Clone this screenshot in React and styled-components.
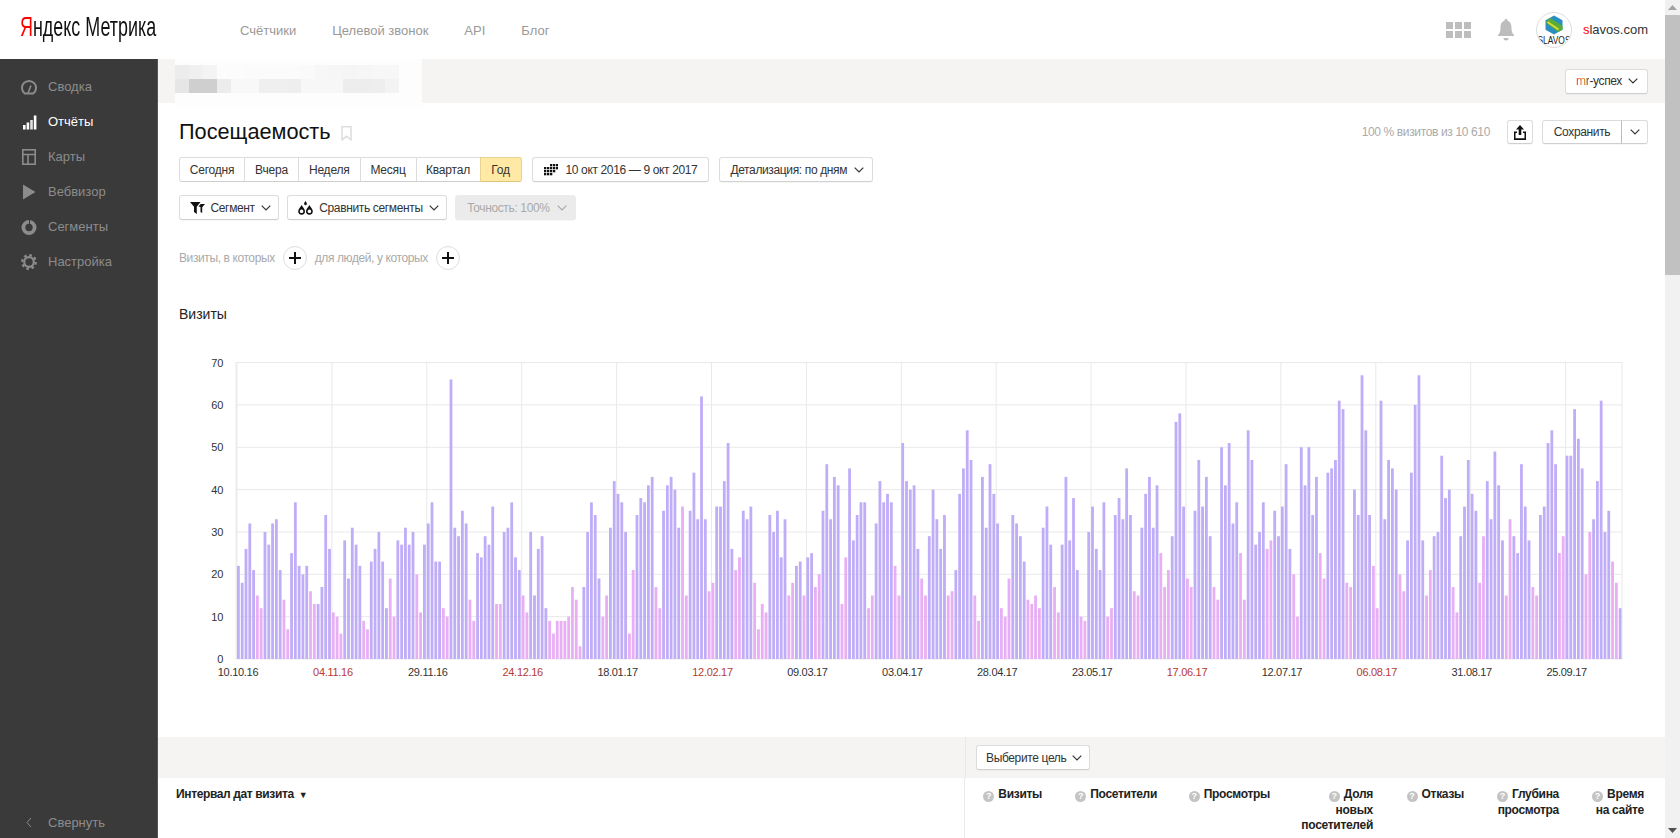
import React from "react";
import styled, { createGlobalStyle } from "styled-components";

const GlobalStyle = createGlobalStyle`
  html, body {
    margin: 0;
    height: 838px;
    overflow: hidden;
    background: #fff;
    font-family: "Liberation Sans", Arial, sans-serif;
  }
`;

const visits = [
  22,18,26,32,21,-15,-12, 30,27,32,33,21,-14,-7, 25,37,22,20,22,-16,-13, 13,17,34,26,-11,-10,-6,
  28,19,31,27,22,-9,-7, 23,26,30,23,12,-19,-10, 28,27,31,27,30,-20,-11, 27,32,37,23,23,-12,-10,
  66,31,29,35,32,-14,-9, 25,24,29,27,36,-13,-13, 30,31,37,24,21,-15,-11, 30,15,26,29,12,-9,-6,
  -9,-9,-9,-10,-17,-14,-3, 17,30,37,34,19,-10,-15, 31,42,39,37,30,-6,-21, 34,38,37,41,43,-17,-12,
  35,41,43,40,31,-36,-15, 35,44,33,62,33,-16,-18, 36,36,42,51,26,-21,-24, 35,33,36,-18,-7,-13,-11,
  34,30,35,24,33,-15,-18, 22,23,-15,24,25,-17,-20, 35,46,33,43,41,-13,-24, 45,28,34,37,37,-12,-15,
  32,42,37,39,37,-22,-15, 51,42,40,41,26,-19,-15, 29,40,33,26,34,-15,-16, 21,39,45,54,47,-15,-9,
  43,31,46,39,32,-12,-10, -19,34,32,29,23,-14,-13, -15,-12,31,36,27,-17,-11, 27,43,28,38,21,-10,-9,
  30,36,26,21,37,-10,-12, 34,38,33,45,34,-16,-15, 31,39,43,31,41,-25,-17, -21,29,56,58,36,-19,-17,
  35,47,36,43,29,-17,-14, 50,41,51,32,37,-25,-14, 54,47,27,30,37,-26,-28, 35,29,36,46,26,-20,-10,
  50,41,50,34,43,-25,-19, 44,45,47,61,59,-18,-17, 40,34,67,54,34,-22,-12, 61,33,47,45,40,-20,-16,
  28,44,60,67,28,-15,-21, 29,30,48,38,40,-17,-11, 29,36,47,39,35,-18,-29, 42,33,49,41,28,-15,-33,
  29,25,46,36,28,-17,-15, 34,36,51,54,46,-25,-29, 48,48,59,52,45,-20,-30, 33,42,61,30,35,-23,-18,
  12,
];

const dateTicks = [
  ["10.10.16"], ["04.11.16", true], ["29.11.16"], ["24.12.16", true], ["18.01.17"],
  ["12.02.17", true], ["09.03.17"], ["03.04.17"], ["28.04.17"], ["23.05.17"],
  ["17.06.17", true], ["12.07.17"], ["06.08.17", true], ["31.08.17"], ["25.09.17"],
];

const Page = styled.div`
  display: flex;
  width: 1680px;
  height: 838px;
  overflow: hidden;
`;

const Content = styled.div`
  flex: 1;
  min-width: 0;
  display: flex;
  flex-direction: column;
`;

const Header = styled.header`
  height: 59px;
  flex: none;
  display: flex;
  align-items: center;
  padding-right: 17px;
  background: #fff;
`;

const Logo = styled.div`
  width: 240px;
  flex: none;
  padding-left: 20px;
  font-size: 28px;
  line-height: 32px;
  color: #111;
  white-space: nowrap;
  box-sizing: border-box;
  margin-top: -5px;
`;

const LogoText = styled.span`
  display: inline-block;
  transform: scaleX(0.64);
  transform-origin: left center;
  b {
    font-weight: normal;
    color: #f00;
  }
`;

const TopNav = styled.nav`
  display: flex;
  gap: 36px;
  flex: 1;
  margin-top: 1px;
`;

const TopLink = styled.a`
  font-size: 13px;
  color: #999;
`;

const HeaderTools = styled.div`
  display: flex;
  align-items: center;
`;

const Avatar = styled.div`
  width: 36px;
  height: 36px;
  margin: 0 11px 0 22px;
  border-radius: 50%;
  border: 1px solid #ddd;
  box-sizing: border-box;
`;

const UserName = styled.span`
  font-size: 13px;
  color: #333;
  b {
    font-weight: normal;
    color: #f00;
  }
`;

const Body = styled.div`
  flex: 1;
  min-height: 0;
  display: flex;
`;

const Sidebar = styled.aside`
  width: 158px;
  flex: none;
  box-sizing: border-box;
  padding: 10px 0 0;
  background: #3a3a3a;
  border-right: 1px solid #555;
  display: flex;
  flex-direction: column;
`;

const SideItem = styled.div`
  height: 35px;
  display: flex;
  align-items: center;
  gap: 11px;
  padding-left: 21px;
  font-size: 13px;
  color: ${(p) => (p.$active ? "#fff" : "#8c8c8c")};
  svg {
    flex: none;
    width: 16px;
    height: 18px;
  }
`;

const Collapse = styled.div`
  margin-top: auto;
  height: 32px;
  display: flex;
  align-items: center;
  gap: 16px;
  padding-left: 26px;
  font-size: 13px;
  color: #8c8c8c;
`;

const Main = styled.main`
  flex: 1;
  min-width: 0;
  overflow: hidden;
  display: flex;
  flex-direction: column;
`;

const Strip = styled.div`
  position: relative;
  height: 44px;
  flex: none;
  display: flex;
  align-items: center;
  justify-content: flex-end;
  padding-right: 17px;
  background: #f5f4f2;
`;

const BlurPatch = styled.div`
  position: absolute;
  left: 17px;
  top: -7px;
  width: 247px;
  height: 55px;
  box-sizing: border-box;
  padding-top: 13px;
  background: #fdfdfd;
  filter: blur(0.6px);
`;

const BlurRow = styled.div`
  display: flex;
  height: 14px;
`;

const BlurCell = styled.div`
  width: 14px;
  background: ${(p) => p.$shade};
`;

const Btn = styled.div`
  display: inline-flex;
  align-items: center;
  justify-content: center;
  gap: ${(p) => p.$gap ?? 6}px;
  height: 25px;
  box-sizing: border-box;
  padding: 0 ${(p) => p.$padR ?? p.$pad ?? 10}px 0 ${(p) => p.$pad ?? 10}px;
  background: #fff;
  border: 1px solid #dcdcdc;
  border-bottom-color: #cfcfcf;
  border-radius: 3px;
  font-size: 12px;
  letter-spacing: -0.36px;
  color: #333;
  white-space: nowrap;
  box-shadow: 0 1px 0 rgba(0, 0, 0, 0.03);
  svg {
    flex: none;
  }
`;

const MutedBtn = styled(Btn)`
  background: #ebebeb;
  border-color: #ebebeb;
  color: #aaa;
`;

const Gradient = styled.span`
  background: linear-gradient(90deg, #f03a17 0, #f08a17 60%, #333 100%);
  -webkit-background-clip: text;
  background-clip: text;
  color: transparent;
`;

const Toolbar = styled.section`
  padding: 17px 17px 0 21px;
  flex: none;
`;

const TitleRow = styled.div`
  height: 24px;
  display: flex;
  align-items: center;
`;

const Title = styled.h1`
  margin: 0 10px 0 0;
  font-size: 21.7px;
  font-weight: normal;
  color: #111;
`;

const Stat = styled.span`
  margin-left: auto;
  margin-right: 17px;
  font-size: 12px;
  letter-spacing: -0.36px;
  color: #aaa;
`;

const IconBtn = styled(Btn)`
  width: 26px;
  height: 24px;
  padding: 0;
  margin-right: 9px;
`;

const Joined = styled.div`
  display: flex;
`;

const SaveBtn = styled(Btn)`
  width: 80px;
  height: 24px;
  padding: 0;
  border-radius: 3px 0 0 3px;
`;

const SaveCaret = styled(Btn)`
  width: 27px;
  height: 24px;
  padding: 0;
  margin-left: -1px;
  border-radius: 0 3px 3px 0;
  border-left-color: #bdbdbd;
`;

const Row = styled.div`
  display: flex;
  gap: ${(p) => p.$gap ?? 10}px;
  align-items: center;
  margin-top: ${(p) => p.$top}px;
`;

const Segmented = styled.div`
  display: flex;
  height: 25px;
  box-sizing: border-box;
  margin-right: 0.5px;
`;

const Period = styled.div`
  display: flex;
  align-items: center;
  justify-content: center;
  width: ${(p) => p.$w}px;
  box-sizing: border-box;
  font-size: 12px;
  letter-spacing: -0.2px;
  color: #333;
  background: ${(p) => (p.$active ? "#ffe9a4" : "#fff")};
  border: 1px solid ${(p) => (p.$active ? "#e9d48f" : "#dcdcdc")};
  border-bottom-color: ${(p) => (p.$active ? "#dcc67e" : "#cfcfcf")};
  margin-left: -1px;
  &:first-child {
    margin-left: 0;
    border-radius: 3px 0 0 3px;
  }
  &:last-child {
    border-radius: 0 3px 3px 0;
  }
`;

const Hint = styled.span`
  font-size: 12px;
  letter-spacing: -0.4px;
  color: #aaa;
`;

const AddCircle = styled.div`
  width: 24px;
  height: 24px;
  display: flex;
  align-items: center;
  justify-content: center;
  border-radius: 50%;
  border: 1px solid #dedede;
  box-sizing: border-box;
  background: #fff;
`;

const SectionTitle = styled.h2`
  margin: 34px 0 0;
  height: 20px;
  line-height: 20px;
  font-size: 14px;
  font-weight: normal;
  color: #222;
`;

const ChartBox = styled.div`
  height: 335px;
  margin: 26px 0 52px 42px;
  flex: none;
`;

const GridLine = styled.line`
  stroke: #e9e9e9;
  stroke-width: 1;
`;

const AxisText = styled.text`
  font-family: "Liberation Sans", Arial, sans-serif;
  font-size: 11px;
  letter-spacing: -0.3px;
  fill: ${(p) => (p.$red ? "#b83a30" : "#333")};
`;

const Band = styled.div`
  height: 41px;
  flex: none;
  display: flex;
  background: #f5f4f2;
`;

const BandLeft = styled.div`
  width: 807px;
  flex: none;
  border-right: 1px solid #e9e9e7;
`;

const BandRight = styled.div`
  flex: 1;
  display: flex;
  align-items: center;
  padding-left: 10px;
`;

const TableHead = styled.div`
  flex: 1;
  display: flex;
`;

const DimCell = styled.div`
  width: 807px;
  flex: none;
  box-sizing: border-box;
  padding: 9px 0 0 18px;
  border-right: 1px solid #e9e9e7;
  font-size: 12px;
  line-height: 15.5px;
  font-weight: bold;
  letter-spacing: -0.37px;
  color: #222;
  i {
    font-style: normal;
    font-size: 9px;
    margin-left: 5px;
  }
`;

const MetricCell = styled.div`
  width: ${(p) => p.$w}px;
  flex: none;
  box-sizing: border-box;
  padding-top: 9px;
  text-align: right;
  font-size: 12px;
  line-height: 15.5px;
  font-weight: bold;
  letter-spacing: -0.3px;
  color: #222;
`;

const QMark = styled.span`
  display: inline-block;
  width: 11px;
  height: 11px;
  margin-right: 4px;
  border-radius: 50%;
  background: #c4c4c4;
  color: #fff;
  font-size: 9px;
  line-height: 11px;
  letter-spacing: 0;
  text-align: center;
  vertical-align: -1px;
`;

const Scrollbar = styled.div`
  width: 15px;
  flex: none;
  display: flex;
  flex-direction: column;
  background: #f1f1f1;
`;

const ScrollArrow = styled.div`
  height: 15px;
  flex: none;
  display: flex;
  align-items: center;
  justify-content: center;
  margin-top: ${(p) => (p.$down ? "auto" : 0)};
`;

const ScrollThumb = styled.div`
  height: 260px;
  background: #c1c1c1;
`;

const BookmarkSvg = styled.svg`
  margin-top: 3px;
`;

const BellSvg = styled.svg`
  margin-left: 27px;
`;

const Chevron = ({ color = "#333" }) => (
  <svg width="10" height="6" viewBox="0 0 10 6">
    <path d="M.7.7L5 5l4.300-4.300" fill="none" stroke={color} strokeWidth="1.200" />
  </svg>
);

const Plus = () => (
  <svg width="12" height="12" viewBox="0 0 12 12">
    <path d="M6 0v12M0 6h12" stroke="#111" strokeWidth="2" />
  </svg>
);

const GaugeIcon = () => (
  <svg viewBox="0 0 16 18">
    <path d="M3.800 15.500h8.400A7 7 0 1 0 3.800 15.500z" fill="none" stroke="#8c8c8c" strokeWidth="2" />
    <path d="M7 15l3-7.500" stroke="#8c8c8c" strokeWidth="1.600" />
  </svg>
);

const BarsIcon = () => (
  <svg viewBox="0 0 16 18" fill="#fff">
    <rect x="2" y="12" width="2.600" height="4.500" />
    <rect x="5.600" y="9.500" width="2.600" height="7" />
    <rect x="9.200" y="7" width="2.600" height="9.500" opacity=".85" />
    <rect x="12.800" y="2.500" width="2.600" height="14" />
  </svg>
);

const MapIcon = () => (
  <svg viewBox="0 0 16 18" fill="none" stroke="#8c8c8c" strokeWidth="1.600">
    <rect x="1.800" y="1.800" width="12.400" height="14.400" />
    <path d="M2 6.500h12M7 6.500V16" />
  </svg>
);

const PlayIcon = () => (
  <svg viewBox="0 0 16 18">
    <path d="M2 1.500l12.500 7.500L2 16.500z" fill="#8c8c8c" />
  </svg>
);

const DonutIcon = () => (
  <svg viewBox="0 0 16 18">
    <circle cx="8" cy="9.500" r="5.600" fill="none" stroke="#8c8c8c" strokeWidth="3.800" />
    <path d="M8.500 1v5.500" stroke="#3a3a3a" strokeWidth="1" />
  </svg>
);

const GearIcon = () => (
  <svg viewBox="0 0 16 18" fill="none" stroke="#8c8c8c">
    <circle cx="8" cy="9" r="4.800" strokeWidth="2.200" />
    <circle cx="8" cy="9" r="6.800" strokeWidth="2.200" strokeDasharray="2.700 2.640" />
  </svg>
);

const CalendarIcon = () => (
  <svg width="14" height="12" viewBox="0 0 14 12" fill="#111">
    {[
      [6, 0], [9, 0], [12, 0],
      [0, 3], [3, 3], [6, 3], [9, 3], [12, 3],
      [0, 6], [3, 6], [6, 6], [9, 6],
      [0, 9], [3, 9], [6, 9],
    ].map(([x, y]) => (
      <rect key={x + "-" + y} x={x} y={y} width="2.300" height="2.300" />
    ))}
  </svg>
);

const FunnelIcon = () => (
  <svg width="15" height="12" viewBox="0 0 15 12" fill="#111">
    <path d="M0 0h10.500L6.800 4.800V12L4 10V4.800z" />
    <path d="M8.500 4.500L10.700 2H15l-2.800 3.200V11L10.500 10V5z" />
  </svg>
);

const DropsIcon = () => (
  <svg width="15" height="14" viewBox="0 0 15 14" fill="#111">
    <path fillRule="evenodd" d="M3.600 4C5 6.600 7 8 7 10.300a3.400 3.400 0 0 1-6.800 0C.2 8 2.200 6.600 3.600 4zm0 4.500a1.800 1.800 0 1 0 .01 0z" />
    <path fillRule="evenodd" d="M11.400 4c1.400 2.600 3.400 4 3.400 6.300a3.400 3.400 0 0 1-6.800 0C8 8 10 6.600 11.400 4zm0 4.500a1.800 1.800 0 1 0 .01 0z" />
    <path d="M7.500 0c.7 1.200 1.400 1.900 1.400 2.800a1.400 1.400 0 0 1-2.800 0C6.100 1.900 6.800 1.200 7.500 0z" />
  </svg>
);

const ShareIcon = () => (
  <svg width="14" height="15" viewBox="0 0 14 15" fill="#111">
    <path d="M7 0l4 4.500H8.300V10H5.700V4.500H3z" />
    <path d="M1 6.500h3V8H2.500v5.200h9V8H10V6.500h3V15H1z" />
  </svg>
);

const BookmarkIcon = () => (
  <BookmarkSvg width="11" height="15" viewBox="0 0 11 15">
    <path d="M1 .8h9v13l-4.500-3.500L1 13.800z" fill="none" stroke="#ddd" strokeWidth="1.500" />
  </BookmarkSvg>
);

const AppsIcon = () => (
  <svg width="25" height="16" viewBox="0 0 25 16" fill="#bdbdbd">
    {[0, 9, 18].map((x) => (
      <React.Fragment key={x}>
        <rect x={x} y="0" width="7" height="7" />
        <rect x={x} y="9" width="7" height="7" />
      </React.Fragment>
    ))}
  </svg>
);

const BellIcon = () => (
  <BellSvg width="16" height="22" viewBox="0 0 16 22" fill="#bdbdbd">
    <path d="M8 0a1.500 1.500 0 0 1 1.500 1.800C12.500 2.600 13.500 5.500 13.500 9c0 4 1 5.500 2.500 7v1H0v-1c1.500-1.500 2.500-3 2.500-7 0-3.500 1-6.400 4-7.200A1.500 1.500 0 0 1 8 0z" />
    <path d="M5.500 19h5a2.500 2.500 0 0 1-5 0z" />
  </BellSvg>
);

const AvatarLogo = () => (
  <svg width="34" height="34" viewBox="0 0 34 34">
    <clipPath id="avatar-clip">
      <circle cx="17" cy="17" r="17" />
    </clipPath>
    <g clipPath="url(#avatar-clip)">
      <path d="M17 2.500l8.500 4.800v9.400L17 21.500l-8.500-4.800V7.300z" fill="#2a8fc0" />
      <path d="M8.500 9.500L13 5l12.500 8v3.700L21 19z" fill="#5aae35" />
      <path d="M10.500 9l11 7.500" stroke="#e2d93a" strokeWidth="1.600" />
      <text
        x="0.500"
        y="31"
        textLength="33"
        lengthAdjust="spacingAndGlyphs"
        fontSize="10.500"
        fontFamily="Liberation Sans, sans-serif"
        fill="#222"
      >
        SLAVOS
      </text>
    </g>
  </svg>
);

const BlurGrid = () => {
  const rows = [
    ["#ececec", "#f0f0f0", "#f4f4f4", "#fcfcfc", "#fcfcfc", "#fbfbfb", "#fbfbfb", "#fbfbfb", "#fbfbfb", "#fafafa", "#f7f7f7", "#f6f6f6", "#f5f5f5", "#f6f6f6", "#f7f7f7", "#f7f7f7"],
    ["#e6e6e6", "#cfcfcf", "#cfcfcf", "#ececec", "#f8f8f8", "#f8f8f8", "#efefef", "#efefef", "#eeeeee", "#f7f7f7", "#f7f7f7", "#f7f7f7", "#ededed", "#ededed", "#eeeeee", "#f3f3f3"],
  ];
  return (
    <BlurPatch>
      {rows.map((cells, r) => (
        <BlurRow key={r}>
          {cells.map((c, i) => (
            <BlurCell key={i} $shade={c} />
          ))}
        </BlurRow>
      ))}
    </BlurPatch>
  );
};

const VisitsChart = () => {
  const x0 = 237;
  const step = 3.796;
  const base = 659;
  const unit = 4.235;
  return (
    <svg width="1440" height="335" viewBox="200 350 1440 335">
      {[0, 10, 20, 30, 40, 50, 60, 70].map((v) => (
        <React.Fragment key={v}>
          <GridLine x1="236" x2="1622" y1={base - v * unit} y2={base - v * unit} />
          <AxisText x="223" y={base - v * unit + 4} textAnchor="end">{v}</AxisText>
        </React.Fragment>
      ))}
      <GridLine x1="236" x2="236" y1="362" y2="659" />
      <GridLine x1="1622" x2="1622" y1="362" y2="659" />
      {dateTicks.map(([label, red], i) => {
        const x = x0 + i * 25 * step;
        return (
          <React.Fragment key={label}>
            <GridLine x1={x} x2={x} y1="362" y2="659" />
            <AxisText x={x + 1} y="676" textAnchor="middle" $red={red}>{label}</AxisText>
          </React.Fragment>
        );
      })}
      {visits.map((v, i) => (
        <rect
          key={i}
          x={x0 + i * step}
          y={base - Math.abs(v) * unit}
          width="2.800"
          height={Math.abs(v) * unit}
          fill={v < 0 ? "#e9aff5" : "#bfadf7"}
        />
      ))}
    </svg>
  );
};

const metrics = [
  { w: 77, label: "Визиты" },
  { w: 115, label: "Посетители" },
  { w: 113, label: "Просмотры" },
  { w: 103, label: "Доля", rest: ["новых", "посетителей"] },
  { w: 91, label: "Отказы" },
  { w: 95, label: "Глубина", rest: ["просмотра"] },
  { w: 85, label: "Время", rest: ["на сайте"] },
];

const periods = [
  ["Сегодня", 66],
  ["Вчера", 55],
  ["Неделя", 62.5],
  ["Месяц", 57],
  ["Квартал", 65],
  ["Год", 42],
];

export default function App() {
  return (
    <Page>
      <GlobalStyle />
      <Content>
        <Header>
          <Logo>
            <LogoText><b>Я</b>ндекс Метрика</LogoText>
          </Logo>
          <TopNav>
            <TopLink>Счётчики</TopLink>
            <TopLink>Целевой звонок</TopLink>
            <TopLink>API</TopLink>
            <TopLink>Блог</TopLink>
          </TopNav>
          <HeaderTools>
            <AppsIcon />
            <BellIcon />
            <Avatar><AvatarLogo /></Avatar>
            <UserName><b>s</b>lavos.com</UserName>
          </HeaderTools>
        </Header>
        <Body>
          <Sidebar>
            <SideItem><GaugeIcon />Сводка</SideItem>
            <SideItem $active><BarsIcon />Отчёты</SideItem>
            <SideItem><MapIcon />Карты</SideItem>
            <SideItem><PlayIcon />Вебвизор</SideItem>
            <SideItem><DonutIcon />Сегменты</SideItem>
            <SideItem><GearIcon />Настройка</SideItem>
            <Collapse>
              <svg width="6" height="11" viewBox="0 0 6 11">
                <path d="M5 1L1 5.500 5 10" fill="none" stroke="#8c8c8c" />
              </svg>
              Свернуть
            </Collapse>
          </Sidebar>
          <Main>
            <Strip>
              <BlurGrid />
              <Btn $pad={10} $padR={9}>
                <span><Gradient>mr</Gradient>-успех</span>
                <Chevron />
              </Btn>
            </Strip>
            <Toolbar>
              <TitleRow>
                <Title>Посещаемость</Title>
                <BookmarkIcon />
                <Stat>100 % визитов из 10 610</Stat>
                <IconBtn><ShareIcon /></IconBtn>
                <Joined>
                  <SaveBtn>Сохранить</SaveBtn>
                  <SaveCaret><Chevron /></SaveCaret>
                </Joined>
              </TitleRow>
              <Row $top={13} $gap={10}>
                <Segmented>
                  {periods.map(([label, w]) => (
                    <Period key={label} $w={w} $active={label === "Год"}>{label}</Period>
                  ))}
                </Segmented>
                <Btn $gap={8} $pad={10.5}><CalendarIcon />10 окт 2016 — 9 окт 2017</Btn>
                <Btn $gap={6.5} $pad={10.5} $padR={8}>Детализация: по дням <Chevron /></Btn>
              </Row>
              <Row $top={13} $gap={8.5}>
                <Btn $gap={6} $pad={9.5} $padR={7}><FunnelIcon />Сегмент <Chevron /></Btn>
                <Btn $gap={6} $pad={10} $padR={7}><DropsIcon />Сравнить сегменты <Chevron /></Btn>
                <MutedBtn $gap={7} $pad={11} $padR={8}>Точность: 100% <Chevron color="#aaa" /></MutedBtn>
              </Row>
              <Row $top={26} $gap={8}>
                <Hint>Визиты, в которых</Hint>
                <AddCircle><Plus /></AddCircle>
                <Hint>для людей, у которых</Hint>
                <AddCircle><Plus /></AddCircle>
              </Row>
              <SectionTitle>Визиты</SectionTitle>
            </Toolbar>
            <ChartBox><VisitsChart /></ChartBox>
            <Band>
              <BandLeft />
              <BandRight>
                <Btn $pad={9} $padR={7}>Выберите цель <Chevron /></Btn>
              </BandRight>
            </Band>
            <TableHead>
              <DimCell>Интервал дат визита<i>▼</i></DimCell>
              {metrics.map((m) => (
                <MetricCell key={m.label} $w={m.w}>
                  <QMark>?</QMark>{m.label}
                  {m.rest && m.rest.map((line) => <div key={line}>{line}</div>)}
                </MetricCell>
              ))}
            </TableHead>
          </Main>
        </Body>
      </Content>
      <Scrollbar>
        <ScrollArrow>
          <svg width="9" height="5" viewBox="0 0 9 5"><path d="M4.500 0L9 5H0z" fill="#a3a3a3" /></svg>
        </ScrollArrow>
        <ScrollThumb />
        <ScrollArrow $down>
          <svg width="9" height="5" viewBox="0 0 9 5"><path d="M0 0h9L4.500 5z" fill="#505050" /></svg>
        </ScrollArrow>
      </Scrollbar>
    </Page>
  );
}
